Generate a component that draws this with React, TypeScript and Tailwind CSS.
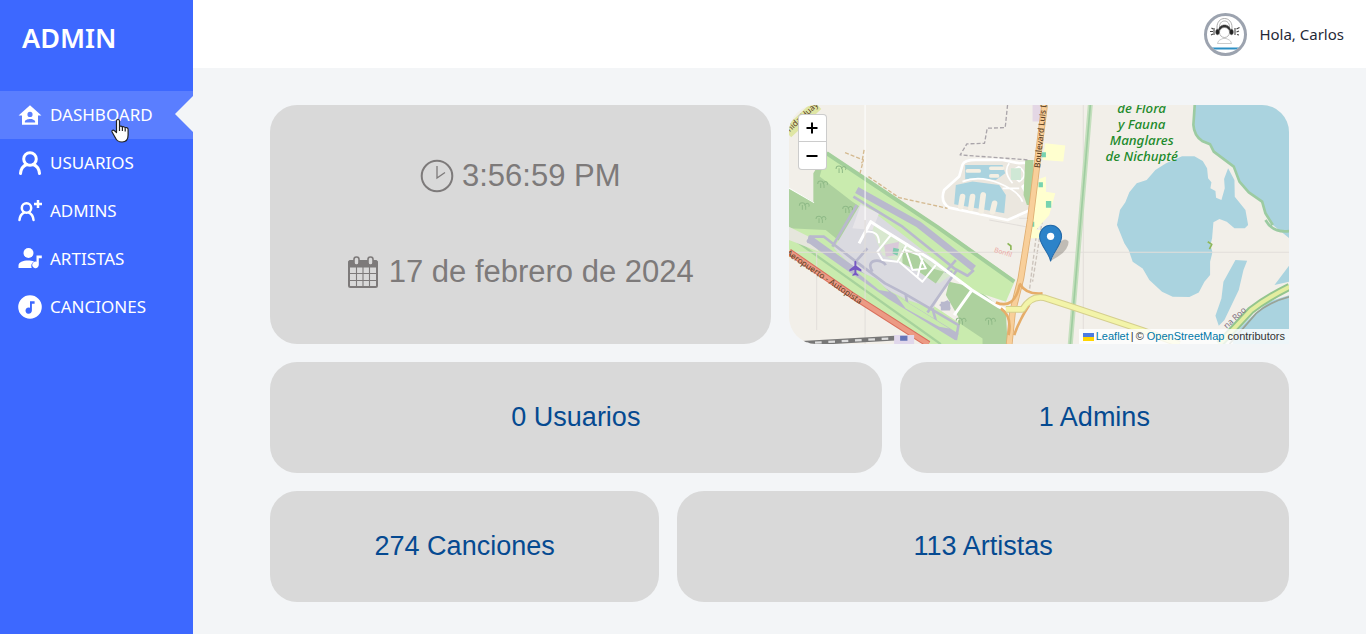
import type { ReactNode } from "react";

const sans = "font-['Segoe_UI','Noto_Sans','Open_Sans',sans-serif]";
const arial = "font-['Liberation_Sans',Arial,sans-serif]";

const HomeIcon = () => (
  <svg viewBox="1.500 1 21 21" className="size-6 shrink-0" fill="currentColor" aria-hidden="true">
    <path d="M12 3 2 12h3v8h14v-8h3L12 3m0 5.75A2.25 2.25 0 0 1 14.25 11 2.25 2.25 0 0 1 12 13.25 2.25 2.25 0 0 1 9.75 11 2.25 2.25 0 0 1 12 8.75M12 15c1.5 0 4.5.75 4.5 2.25V18h-9v-.75C7.500 15.75 10.500 15 12 15Z" />
  </svg>
);

const UserIcon = () => (
  <svg viewBox="2 2 24 24" className="size-6 shrink-0" fill="none" stroke="currentColor" strokeWidth="3" strokeLinecap="round" aria-hidden="true">
    <circle cx="14" cy="10" r="6.300" />
    <path d="M4.500 24.500c.4-4.700 2.600-7.600 6.200-9M23.500 24.500c-.4-4.700-2.600-7.600-6.200-9" />
  </svg>
);

const UserPlusIcon = () => (
  <svg viewBox="2 2 24 24" className="size-6 shrink-0" fill="none" stroke="currentColor" strokeWidth="2.500" strokeLinecap="round" aria-hidden="true">
    <circle cx="10.500" cy="11" r="4.700" />
    <path d="M3.500 23c.3-3.800 1.800-6 4.500-7.400M17.500 23c-.3-3.800-1.800-6-4.500-7.400" />
    <path strokeLinecap="butt" d="M22 3v8M18 7h8" />
  </svg>
);

const ArtistIcon = () => (
  <svg viewBox="2 2 24 24" className="size-6 shrink-0" fill="currentColor" aria-hidden="true">
    <circle cx="12.500" cy="8" r="5" />
    <path d="M2.500 23v-2.500c0-3.300 4.500-5 9.500-5 2.300 0 4.400.3 6 1a5 5 0 0 0-2.300 6.500H2.500Z" />
    <path d="M20.500 10.500h5.300v2.700h-3v6.600a3.300 3.300 0 1 1-2.300-3.100v-6.200Z" />
  </svg>
);

const MusicIcon = () => (
  <svg viewBox="2 2 24 24" className="size-6 shrink-0" fill="currentColor" fillRule="evenodd" aria-hidden="true">
    <path d="M14 2.200a11.800 11.800 0 1 1 0 23.600 11.800 11.800 0 0 1 0-23.600Zm0 6v6.500a3.200 3.200 0 1 0 1.900 2.900V10.800h2.700V8.200H14Z" />
  </svg>
);

const ClockIcon = () => (
  <svg viewBox="0 0 34 34" className="size-[34px] shrink-0" fill="none" stroke="currentColor" aria-hidden="true">
    <circle cx="17" cy="17" r="15.300" strokeWidth="2" />
    <path d="M17 7v12l8-5.500" strokeWidth="1.300" />
  </svg>
);

const CalendarIcon = () => (
  <svg viewBox="0 0 32 34" className="h-[34px] w-8 shrink-0" fill="none" stroke="currentColor" aria-hidden="true">
    <rect x="2" y="6" width="28" height="26" rx="1.500" strokeWidth="2" />
    <path d="M2 6h28v6H2Z" fill="currentColor" strokeWidth="1" />
    <path d="M2 18.500h28M2 25.500h28M9.500 12v20M16 12v20M22.500 12v20" strokeWidth="1.100" />
    <rect x="7" y="2" width="5" height="8" rx="2.300" className="fill-[#d9d9d9]" strokeWidth="1.600" />
    <rect x="21" y="2" width="5" height="8" rx="2.300" className="fill-[#d9d9d9]" strokeWidth="1.600" />
  </svg>
);

const Avatar = () => (
  <svg viewBox="0 0 37 37" className="size-full" fill="none" stroke="#444" strokeWidth="0.6" role="img" aria-label="Carlos">
    <path d="M10 15v-4c0-4.500 3-8.500 7.500-8.500S25 6.500 25 11v4M12.500 13v-2c0-3.500 2-6 5-6s5 2.500 5 6v2" stroke="#999" strokeWidth=".8" />
    <path d="M11.500 15c0-4 3-6 6-6s6 2 6 6c-3-2.500-9-2.500-12 0Z" fill="#333" />
    <circle cx="17.500" cy="16.500" r="5" fill="white" stroke="#888" />
    <ellipse cx="10.500" cy="16" rx="1.800" ry="2.700" fill="#222" />
    <ellipse cx="24.500" cy="16" rx="1.800" ry="2.700" fill="#222" />
    <path d="M10.500 27.500c.5-3.500 3.500-4 5.500-5h3c2 1 5 1.500 5.500 5Z" stroke="#aaa" />
    <path d="M7 12v7M4.500 12l1.500 1M3 15.500h3M4 19l2-1M28 12v7M29.500 13l3-1.500M29.500 16l2.500-1M30 18.500l2 .5" strokeWidth="1.100" />
    <path d="M5 31.500h27v2H5Z" fill="#2d8fc4" stroke="none" />
  </svg>
);

const PointerIcon = () => (
  <svg viewBox="0 0 18 25" className="pointer-events-none absolute top-[27px] left-[111px] h-[25px] w-[18px]" fill="white" stroke="#222" strokeWidth="1.200" strokeLinejoin="round" aria-hidden="true">
    <path d="M5.500 14V3a1.500 1.500 0 0 1 3 0v6c0-1.200 2.800-1.200 2.900.5 0-1.200 2.700-1.100 2.800.7.200-1.200 2.900-.8 2.900 1V17c0 4-2 7-6 7-4.500 0-5.800-2-7.200-5l-2.800-5c-.8-1.700 1.300-2.500 2.400-1.200L5.500 14.500Z" />
    <path d="M8.500 9v4M11.400 9.500V13M14.200 10.500V13.500" />
  </svg>
);

const trees = [[40, 300], [95, 235], [150, 190], [170, 310], [90, 340], [510, 645], [598, 645]];

const MapTiles = () => (
  <svg viewBox="0 0 1500 717" preserveAspectRatio="xMidYMid slice" className="block size-full" fill="none" strokeLinejoin="round" aria-label="Mapa">
    <rect width="1500" height="717" fill="#f2efe9" />
    {/* Water */}
    <g fill="#aad3df">
      <path d="M1218 0 1214 60Q1216 92 1238 108L1262 118 1273 140 1333 185 1350 230 1378 262 1418 290 1428 325 1450 360 1500 400V0Z" />
      <path d="M983 360 992 315 1008 292 1020 262 1042 235 1072 225 1098 195 1130 175 1178 154 1215 154 1240 168 1253 190 1256 220 1266 232 1263 250 1278 258 1280 278 1296 285 1306 250 1304 222 1316 190 1335 225 1336 275 1368 315 1376 360 1366 370 1335 370 1312 350 1290 342 1272 352 1268 400 1263 420 1269 442 1262 470 1262 510 1245 530 1228 562 1200 576 1150 575 1118 560 1080 525 1060 490 1030 470 1018 435 1005 415Z" />
      <path d="M1338 465 1373 467 1362 495 1348 555 1305 645 1288 662 1278 632 1296 580 1302 530Z" />
      <path d="M1500 570 1438 590 1380 640 1330 690V717h170ZM1500 480 1455 540 1500 530Z" />
    </g>
    <path d="M1216 0 1212 60Q1214 92 1238 108L1262 118 1273 140 1333 185 1350 230 1378 262 1418 290 1428 325 1450 360M1428 345Q1450 385 1500 378" stroke="#9ccba2" strokeWidth="8" />
    {/* Woodland and airfield grass */}
    <path d="M113 140 73 205V290L0 250V410L140 470 330 345 200 230Z" fill="#add19e" />
    <path d="M480 530 560 548 650 620 655 717H480L510 640 470 570Z" fill="#add19e" />
    <path d="M113 140 443 360 678 525 650 590 560 560 400 440 280 350 190 290 92 215Z" fill="#c9ebae" />
    <path d="M113 145 443 365 675 530" stroke="#a3cf9b" strokeWidth="12" />
    <path d="M0 370 110 375 190 440 580 700V717H420L0 435Z" fill="#c9ebae" />
    <path d="M10 400 455 717" stroke="#a7d29c" strokeWidth="7" />
    <path d="M0 365 60 395 90 440 0 405Z" fill="#e5e6dc" />
    {/* Terminal apron */}
    <path d="M215 295 278 340 490 505 432 610 355 585 220 515 135 430Z" fill="#dadae0" />
    <path d="M240 350 305 390 485 510 450 535 350 480 280 450Z" fill="#d8e8cf" />
    <path d="M340 430 375 440 430 490 465 500 440 535 390 500 340 475Z" fill="#add19e" />
    <path d="M215 300 270 325 250 375 190 370Z" fill="#e7e5e8" />
    <path d="M285 420 330 410 325 450 290 455Z" fill="#d9cad9" />
    {/* Runways and taxiways */}
    <g stroke="#b9b9cd">
      <path d="M203 255 388 358 554 490" strokeWidth="20" />
      <path d="M193 275 340 365 495 490 535 512 554 495M203 300 130 425M503 495 415 622M490 500 470 500 500 465" strokeWidth="8" />
      <path d="M58 400 170 480 300 570 503 695" strokeWidth="22" />
      <path d="M58 415 62 395 105 395 188 460 288 535 345 565 508 660 500 705M235 430 200 470M250 500C225 460 280 460 290 480M350 570 355 600M430 610 445 665M455 600 475 590 480 610Z" strokeWidth="8" />
      <path d="M455 590h28v26h-28Z" fill="#b9b9cd" stroke="none" />
    </g>
    <path d="M190 490 260 520 300 560 270 555ZM320 570 400 620 480 670 450 665 350 610Z" fill="#c9ebae" />
    {/* Airport service roads */}
    <g stroke="white" strokeWidth="9">
      <path d="M210 415 245 350 275 370 428 465 548 555 628 605Q660 622 690 612M548 555 495 630" />
      <path d="M305 390 265 440 280 465 325 470 355 415M330 470 400 530 440 480M230 380Q270 375 270 415M350 435 390 450 410 490 370 495ZM400 460 385 515" strokeWidth="6" />
      <path d="M0 250 75 293M228 0V345" strokeWidth="3" />
    </g>
    <path d="M313 428 330 432 325 452 310 445Z" fill="#7fcbae" />
    {/* Hotel district lagoon pools */}
    <path d="M520 180Q525 165 560 165H640L690 175 730 172 730 225 700 245 735 310 655 345 480 308Q452 290 465 255L510 215Z" fill="#ebe7df" stroke="white" strokeWidth="8" />
    <path d="M528 180 640 180 648 205 620 225 560 220 528 223ZM500 240 550 230 630 240 650 270 645 325 495 298Z" fill="#aad3df" />
    <g stroke="#f4efe3" strokeLinecap="round">
      <path d="M535 198H570M605 190H640M605 213H625" strokeWidth="11" />
      <path d="M520 275 515 305M550 275 545 310M582 270 576 318M616 295 610 320" strokeWidth="17" />
    </g>
    <path d="M520 230Q570 210 630 235T700 290M660 175Q640 200 670 235M690 185Q650 200 690 230Q720 210 690 185M640 250H690" stroke="white" strokeWidth="5" />
    <path d="M665 190h30v35h-30Z" fill="#cfe8d5" />
    <path d="M708 165h25v135h-20l-10-30Z" fill="#add19e" />
    {/* Footpaths */}
    <g strokeWidth="4" strokeDasharray="12 6">
      <path d="M655 0 648 68 594 70 586 115 533 117 513 150 720 165" stroke="#aaa5aa" />
      <path d="M168 143 223 165 213 205M225 135 218 175M238 215 330 278 475 310" stroke="#d4b98f" />
      <path d="M765 310 730 530M745 360 720 560" stroke="#cbc3bb" />
    </g>
    <path d="M0 442H1500M882 0V717M228 345V717M83 440V675M690 340H750M600 345 710 365" stroke="#e2deda" strokeWidth="3" />
    {/* Built-up plots */}
    <path d="M768 115 828 122 822 170 760 165ZM750 222 770 215 770 260 798 265 780 330 745 370 720 400 728 310ZM715 375h45v25h-45Z" fill="#ffffcf" />
    <path d="M730 0h25v50h-25Z" fill="#e4d7e5" />
    <path d="M757 142h13v15h-13ZM748 232h13v15h-13ZM770 288h16v20h-16ZM722 350h13v15h-13Z" fill="#77d3b0" />
    {/* Main roads */}
    <path d="M903 0 873 360 843 717" stroke="#c4dfbd" strokeWidth="15" />
    <path d="M903 0 873 360 843 717" stroke="#9fcda0" strokeWidth="5" />
    <path d="M0 440 188 570 418 717" stroke="#d9705d" strokeWidth="20" />
    <path d="M0 440 188 570 418 717" stroke="#ec9a84" strokeWidth="14" />
    <path d="M766 0 747 150 723 345 695 520 670 620 660 717" stroke="#dfae72" strokeWidth="20" />
    <path d="M766 0 747 150 723 345 695 520 670 620 660 717" stroke="#f8cf9a" strokeWidth="15" />
    <path d="M691 535Q710 570 760 565M620 592Q675 615 691 540M635 610Q670 635 658 690M720 600Q690 645 675 690" stroke="#e6ad69" strokeWidth="8" />
    <path d="M650 613H700Q725 570 765 578L848 605 1058 675 1170 717" stroke="#d5cf8e" strokeWidth="20" />
    <path d="M650 613H700Q725 570 765 578L848 605 1058 675 1170 717" stroke="#f3f4a9" strokeWidth="14" />
    <path d="M1290 717 1385 615Q1430 580 1500 545" stroke="#94c58d" strokeWidth="24" />
    <path d="M1290 717 1385 615Q1430 580 1500 545" stroke="#e3eda0" strokeWidth="12" />
    <path d="M1320 717 1400 625Q1440 590 1500 575" stroke="#99a397" strokeWidth="5" />
    <path d="M-5 85 85 0" stroke="#dfe6a4" strokeWidth="34" />
    <path d="M38 715 358 697" stroke="#777" strokeWidth="14" />
    <path d="M38 715 358 697" stroke="#ddd" strokeWidth="7" strokeDasharray="20 20" />
    <path d="M315 690h60v27h-60Z" fill="#e0d7eb" />
    <path d="M333 692h22v15h-22Z" fill="#6574b8" />
    <path d="M196 470v12l-15 11v6l15-5v10l-6 5v4l9-3 9 3v-4l-6-5v-10l15 5v-6l-15-11v-12q-3-5-6 0Z" fill="#7658c2" />
    <g stroke="#8fba87" strokeWidth="3">
      {trees.map(([x, y]) => (
        <path key={`${x}-${y}`} d={`M${x} ${y}v14m-9-12a8 8 0 1 1 17 0m2 12v-9a6 6 0 1 1 9 0`} />
      ))}
    </g>
    <path d="M1255 410l12 8-7 14M655 415l10 8v12" stroke="#8eb75a" strokeWidth="5" />
    {/* Labels */}
    <g className="font-['Noto_Sans',sans-serif]">
      <g fill="#218a2b" fontSize="40" fontStyle="italic" fontWeight="500" textAnchor="middle">
        <text x="1057" y="24">de Flora</text>
        <text x="1057" y="72">y Fauna</text>
        <text x="1057" y="120">Manglares</text>
        <text x="1057" y="168">de Nichupté</text>
      </g>
      <g fill="#5d4225" fontSize="25">
        <text transform="translate(752 190) rotate(-84)" fontWeight="500">Boulevard Luis Don</text>
        <text transform="translate(-10 448) rotate(34)">Aeropuerto - Autopista</text>
        <text transform="translate(2 82) rotate(-43)">nida Huay</text>
        <text transform="translate(1312 672) rotate(-43)" fill="#806f80">na Roo</text>
        <text transform="translate(614 440) rotate(18)" fill="#eda6a2" fontSize="20">Bonfil</text>
      </g>
    </g>
    {/* Position marker */}
    <path d="M785 467 808 415Q828 395 838 410 838 440 785 467Z" fill="#635f57" opacity=".35" />
    <path d="M784 468C778 440 751 420 751 394a33 33 0 0 1 66 0c0 26-26 46-33 74Z" fill="#2d83c9" stroke="#2369a8" strokeWidth="3" />
    <circle cx="784" cy="394" r="11" fill="white" />
  </svg>
);

type NavItem = { label: string; icon: ReactNode; active?: boolean };

const navItems: NavItem[] = [
  { label: "DASHBOARD", icon: <HomeIcon />, active: true },
  { label: "USUARIOS", icon: <UserIcon /> },
  { label: "ADMINS", icon: <UserPlusIcon /> },
  { label: "ARTISTAS", icon: <ArtistIcon /> },
  { label: "CANCIONES", icon: <MusicIcon /> },
];

const Stat = ({ text }: { text: string }) => (
  <a href="#" className="flex h-[111px] min-w-0 items-center justify-center rounded-[27px] bg-[#d9d9d9] text-[27px] text-[#054a91]">
    {text}
  </a>
);

export default function App() {
  return (
    <div className={`${sans} flex min-h-screen bg-[#f3f5f7]`}>
      <aside className="w-[193px] shrink-0 bg-[#3d68ff] text-white">
        <h1 className="flex h-[91px] items-start px-[22px] pt-[18px] text-[27px] leading-10 font-semibold">ADMIN</h1>
        <nav>
          {navItems.map(({ label, icon, active }) => (
            <a key={label} href="#" className={`relative flex h-12 items-center gap-2 pl-[18px] text-[17px] ${active ? "bg-[#5a7eff]" : ""}`}>
              {icon}
              {label}
              {active && (
                <>
                  <span className="absolute top-[5px] right-0 h-9 w-[18px] bg-[#f3f5f7] [clip-path:polygon(100%_0,0_50%,100%_100%)]" />
                  <PointerIcon />
                </>
              )}
            </a>
          ))}
        </nav>
      </aside>
      <div className="min-w-0 flex-1">
        <header className="flex h-[68px] items-center justify-end gap-3 bg-white px-[22px] text-[#1f2937]">
          <span className="size-[43px] overflow-hidden rounded-full border-3 border-[#9ca3af]">
            <Avatar />
          </span>
          <span className="text-[15px]">Hola, Carlos</span>
        </header>
        <main className={`${arial} flex flex-col gap-[18px] px-[77px] pt-[37px] pb-8`}>
          <section className="grid grid-cols-2 gap-[18px]">
            <div className="flex h-[239px] flex-col items-center justify-center gap-12 rounded-[27px] bg-[#d9d9d9] pb-[2px] text-[31px] leading-[48px] text-[#7d7a7a]">
              <p className="flex items-center gap-2"><ClockIcon />3:56:59 PM</p>
              <p className="flex items-center gap-[10px]"><CalendarIcon />17 de febrero de 2024</p>
            </div>
            <div className="relative h-[239px] overflow-hidden rounded-[27px] rounded-br-none">
              <MapTiles />
              <div className="absolute top-[9px] left-[9px] flex w-[29px] flex-col divide-y divide-[#ccc] overflow-hidden rounded-sm border border-black/20 bg-white text-black">
                <button type="button" aria-label="Acercar" className="flex h-[27px] items-center justify-center">
                  <svg viewBox="0 0 12 12" className="size-3" stroke="currentColor" strokeWidth="2"><path d="M6 .5v11M.5 6h11" /></svg>
                </button>
                <button type="button" aria-label="Alejar" className="flex h-[27px] items-center justify-center">
                  <svg viewBox="0 0 12 12" className="size-3" stroke="currentColor" strokeWidth="2"><path d="M.5 6h11" /></svg>
                </button>
              </div>
              <div className="absolute right-0 bottom-0 flex items-center gap-[2px] bg-white/80 px-1 text-[11px] leading-[15px] text-[#333]">
                <svg viewBox="0 0 11 8" className="h-2 w-[11px]" aria-hidden="true"><path fill="#4c7be1" d="M0 0h11v4H0z" /><path fill="#ffd500" d="M0 4h11v4H0z" /></svg>
                <a href="#" className="text-[#0078a8]">Leaflet</a>
                <span>|</span>
                <span>© <a href="#" className="text-[#0078a8]">OpenStreetMap</a> contributors</span>
              </div>
            </div>
          </section>
          <section className="grid grid-cols-[11fr_7fr] gap-[18px]">
            <Stat text="0 Usuarios" />
            <Stat text="1 Admins" />
          </section>
          <section className="grid grid-cols-[7fr_11fr] gap-[18px]">
            <Stat text="274 Canciones" />
            <Stat text="113 Artistas" />
          </section>
        </main>
      </div>
    </div>
  );
}
